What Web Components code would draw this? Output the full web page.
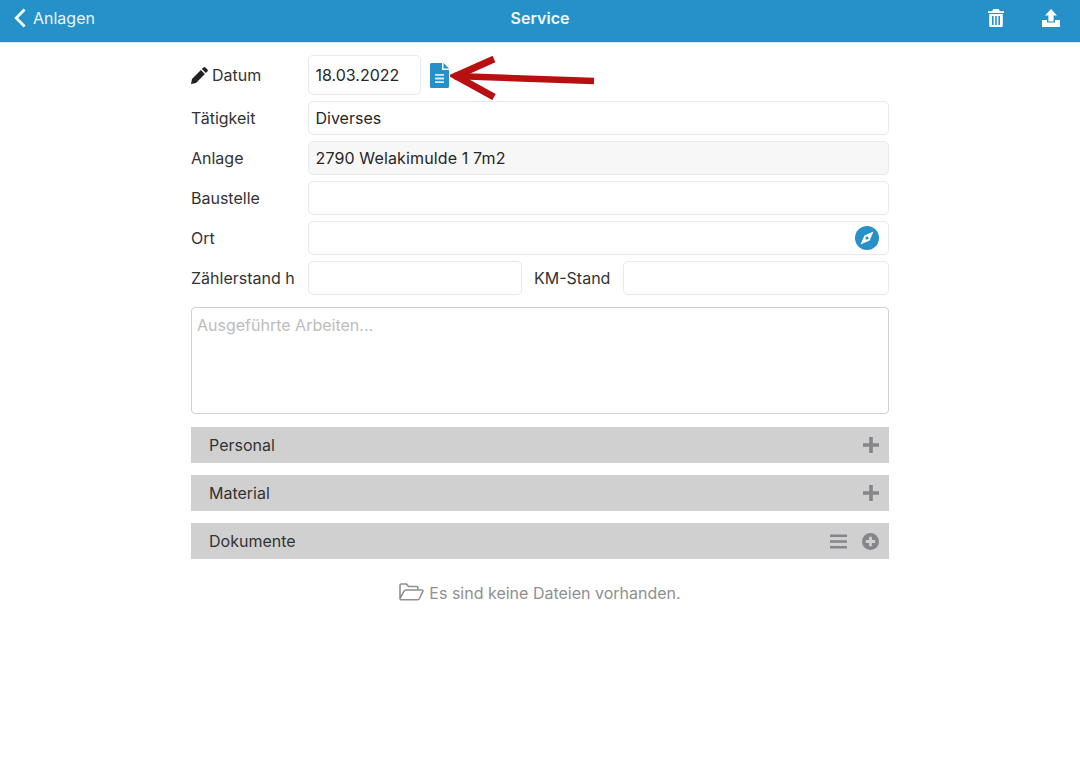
<!DOCTYPE html>
<html lang="de">
<head>
<meta charset="utf-8">
<title>Service</title>
<style>
  html, body { margin: 0; background: #fff; }
  body { font-family: Inter, "Liberation Sans", sans-serif; font-size: 16px; color: #2b2b2b; }
</style>
</head>
<body>
<service-page></service-page>

<script>
/*
Nav bar
*/
class AppNavbar extends HTMLElement {
	constructor() {
		super();
		this.attachShadow({ mode: 'open' });
		this.shadowRoot.innerHTML = `
  <style>
	:host { display: grid; grid-template-columns: 1fr auto 1fr; align-items: center; height: 36px; padding: 0 20px 6px 20px; background: #2690c8; border-bottom: 1px solid #d5e8f3; color: #fff; }
	.back { display: flex; align-items: center; gap: 7px; margin-left: -7px; color: #e8f4fb; }
	.title { font-weight: 600; font-size: 16px; color: #f2f8fc; }
	.actions { display: flex; justify-content: flex-end; gap: 38px; align-items: center; }
	svg { display: block; fill: #fff; }
  </style>
  <div class="back">
    <svg width="13" height="20" viewBox="0 0 13 20"><path d="M10.6 0.6 L12.6 2.6 L5.2 10 L12.6 17.4 L10.6 19.4 L1.2 10 Z" fill="#f2f8fc"/></svg>
    <span>Anlagen</span>
  </div>
  <div class="title">Service</div>
  <div class="actions">
    <svg width="16" height="18" viewBox="0 0 16 18"><path fill-rule="evenodd" d="M5.2 0H10.8L11.8 2.2H16V4H0V2.2H4.2ZM1.2 5H14.8V16.4C14.8 17.3 14.1 18 13.2 18H2.8C1.9 18 1.2 17.3 1.2 16.4ZM4 7V16H5.6V7ZM7.2 7V16H8.8V7ZM10.4 7V16H12V7Z"/></svg>
    <svg width="18" height="18" viewBox="0 0 18 18"><path d="M9 0 L15 6.4 H11.6 V12.4 H6.4 V6.4 H3 Z M0 11 H5 V13.6 H13 V11 H18 V18 H0 Z"/></svg>
  </div>
`;
	}
}
customElements.define('app-navbar', AppNavbar);

/*
Input box, value comes through the slot
*/
class TextField extends HTMLElement {
	constructor() {
		super();
		this.attachShadow({ mode: 'open' });
		this.shadowRoot.innerHTML = `
  <style>
	:host { display: flex; align-items: center; box-sizing: border-box; height: 34px; padding: 0 6.5px; flex: 1; min-width: 0; background: #fff; border: 1px solid #e7e9ea; border-radius: 5px; color: #262626; }
	:host([readonly]) { background: #f7f7f7; letter-spacing: 0.14px; }
	:host([tall]) { height: 40px; }
	.value { flex: 1; }
	::slotted(svg) { display: block; margin-right: 2.5px; }
  </style>
  <div class="value"><slot></slot></div>
  <slot name="end"></slot>
`;
	}
}
customElements.define('text-field', TextField);

/*
Row with label column + content
*/
class FormRow extends HTMLElement {
	constructor() {
		super();
		this.attachShadow({ mode: 'open' });
		this.shadowRoot.innerHTML = `
  <style>
	:host { display: grid; grid-template-columns: 117px 1fr; align-items: center; }
	.label { display: flex; align-items: center; gap: 4px; color: #333; }
	.content { display: flex; align-items: center; min-width: 0; }
  </style>
  <div class="label"><slot name="icon"></slot><span class="txt"></span></div>
  <div class="content"><slot></slot></div>
`;
	}
	connectedCallback() {
		this.shadowRoot.querySelector('.txt').textContent = this.getAttribute('label');
	}
}
customElements.define('form-row', FormRow);

/*
Grey section header
*/
class SectionBar extends HTMLElement {
	constructor() {
		super();
		this.attachShadow({ mode: 'open' });
		this.shadowRoot.innerHTML = `
  <style>
	:host { display: flex; align-items: center; justify-content: space-between; height: 36px; padding: 0 10px 0 18px; background: #d0d0d0; color: #333; }
	.icons { display: flex; align-items: center; gap: 15px; }
	::slotted(svg) { display: block; }
  </style>
  <span class="name"></span>
  <div class="icons"><slot></slot></div>
`;
	}
	connectedCallback() {
		this.shadowRoot.querySelector('.name').textContent = this.getAttribute('name');
	}
}
customElements.define('section-bar', SectionBar);

/*
Whole page
*/
const templatePage = document.createElement('template');
templatePage.innerHTML = `
  <style>
	:host { display: block; position: relative; height: 782px; overflow: hidden; }
	main { display: flex; flex-direction: column; width: 698px; margin: 0 auto; padding-top: 12px; }
	.fields { display: flex; flex-direction: column; gap: 6px; }
	.date { flex: 0 0 113px; }
	.doc { display: block; margin-left: 9px; }
	.km { flex: 0 0 77px; margin: 0 12px; color: #333; white-space: nowrap; }
	.notes { box-sizing: border-box; height: 107px; margin-top: 12px; padding: 7px 5px; border: 1px solid #d0d0d0; border-radius: 4px; color: #bdbdbd; }
	.sections { display: flex; flex-direction: column; gap: 12px; margin-top: 13px; }
	.empty { display: flex; justify-content: center; align-items: center; gap: 5px; margin-top: 24px; color: #8f8f8f; }
	.empty svg { display: block; margin-top: -3px; }
	.arrow { position: absolute; left: 450px; top: 56px; }
  </style>
  <app-navbar></app-navbar>
  <main>
    <div class="fields">
      <form-row label="Datum">
        <svg slot="icon" width="17" height="17" viewBox="0 0 17 17" style="display:block"><path fill="#222" d="M12.4 0.6 C13 0 13.8 0 14.4 0.6 L16.4 2.6 C17 3.2 17 4 16.4 4.6 L14.9 6.1 L10.9 2.1 Z M9.9 3.1 L13.9 7.1 L5 16 L0 17 L1 12 Z"/></svg>
        <text-field class="date" tall>18.03.2022</text-field>
        <svg class="doc" width="19" height="25" viewBox="0 0 19 25"><path fill="#2690c8" d="M1.5 0 H12 V7 H19 V23.5 C19 24.3 18.3 25 17.5 25 H1.5 C0.7 25 0 24.3 0 23.5 V1.5 C0 0.7 0.7 0 1.5 0 Z M13.5 0 L19 5.5 H13.5 Z"/><path fill="#d9edf7" d="M5 11 H14 V12.8 H5 Z M5 14.6 H14 V16.4 H5 Z M5 18.2 H14 V20 H5 Z"/></svg>
      </form-row>
      <form-row label="Tätigkeit"><text-field>Diverses</text-field></form-row>
      <form-row label="Anlage"><text-field readonly>2790 Welakimulde 1 7m2</text-field></form-row>
      <form-row label="Baustelle"><text-field></text-field></form-row>
      <form-row label="Ort">
        <text-field>
          <svg slot="end" width="24" height="24" viewBox="0 0 24 24"><circle cx="12" cy="12" r="12" fill="#2690c8"/><path fill="#fff" fill-rule="evenodd" d="M18.5 5.5 L14.6 14.6 L5.5 18.5 L9.4 9.4 Z M12 10.4 A1.6 1.6 0 1 0 12 13.6 A1.6 1.6 0 1 0 12 10.4 Z"/></svg>
        </text-field>
      </form-row>
      <form-row label="Zählerstand h">
        <text-field></text-field>
        <span class="km">KM-Stand</span>
        <text-field style="flex:0 0 266px"></text-field>
      </form-row>
    </div>
    <div class="notes">Ausgeführte Arbeiten...</div>
    <div class="sections">
      <section-bar name="Personal">
        <svg width="16" height="16" viewBox="0 0 16 16"><path fill="#85858a" d="M6.2 0 H9.8 V6.2 H16 V9.8 H9.8 V16 H6.2 V9.8 H0 V6.2 H6.2 Z"/></svg>
      </section-bar>
      <section-bar name="Material">
        <svg width="16" height="16" viewBox="0 0 16 16"><path fill="#85858a" d="M6.2 0 H9.8 V6.2 H16 V9.8 H9.8 V16 H6.2 V9.8 H0 V6.2 H6.2 Z"/></svg>
      </section-bar>
      <section-bar name="Dokumente">
        <svg width="17" height="15" viewBox="0 0 17 15"><path fill="#85858a" d="M0 0.5 H17 V2.9 H0 Z M0 6.3 H17 V8.7 H0 Z M0 12.1 H17 V14.5 H0 Z"/></svg>
        <svg width="17" height="17" viewBox="0 0 17 17"><path fill="#85858a" fill-rule="evenodd" d="M8.5 0 A8.5 8.5 0 1 1 8.5 17 A8.5 8.5 0 1 1 8.5 0 Z M7.1 3.8 V7.1 H3.8 V9.9 H7.1 V13.2 H9.9 V9.9 H13.2 V7.1 H9.9 V3.8 Z"/></svg>
      </section-bar>
    </div>
    <div class="empty">
      <svg width="25" height="18" viewBox="0 0 25 18"><path fill="none" stroke="#8f8f8f" stroke-width="1.6" stroke-linejoin="round" d="M1 15.5 V2.5 C1 1.6 1.6 1 2.5 1 H7.5 L9.5 3.5 H17.5 C18.4 3.5 19 4.1 19 5 V7 M1 15.5 L5 8.2 C5.3 7.5 5.9 7 6.8 7 H23 C23.8 7 24.2 7.7 23.8 8.4 L20.4 15.5 C20 16.3 19.4 16.8 18.5 16.8 H2.5 C1.6 16.8 1 16.3 1 15.5 Z"/></svg>
      <span>Es sind keine Dateien vorhanden.</span>
    </div>
  </main>
  <svg class="arrow" width="146" height="44" viewBox="0 0 146 44"><path fill="none" stroke="#b81010" stroke-width="6.5" d="M4 20 L144 25"/><path fill="none" stroke="#b81010" stroke-width="7" stroke-linejoin="miter" d="M44 3 L6 20 L44 41"/></svg>
`;
class ServicePage extends HTMLElement {
	constructor() {
		super();
		this.attachShadow({ mode: 'open' });
		this.shadowRoot.appendChild(templatePage.content.cloneNode(true));
	}
}
customElements.define('service-page', ServicePage);
</script>
</body>
</html>
